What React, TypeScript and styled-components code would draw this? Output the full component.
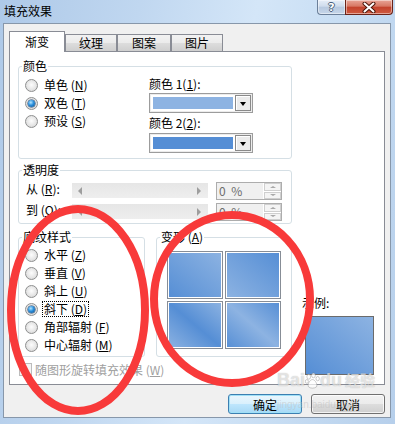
import styled, { createGlobalStyle, css } from 'styled-components'

const LIGHT = '#8db3e2'
const DARK = '#558ed5'

const GlobalStyle = createGlobalStyle`
  html, body { margin: 0; padding: 0; }
  body {
    font-family: "Noto Sans CJK SC", "Liberation Sans", sans-serif;
    font-size: 12px;
    color: #000;
  }
`

const Window = styled.div`
  position: relative;
  width: 395px;
  height: 424px;
  overflow: hidden;
  display: flex;
  flex-direction: column;
  background: linear-gradient(100deg, #aec9e8 0%, #c0d7f0 30%, #d4e6f8 55%, #c7ddf3 75%, #b6cfeb 100%);
`

const TitleBar = styled.div`
  display: flex;
  align-items: flex-start;
  height: 23px;
  flex-shrink: 0;
`

const Title = styled.div`
  padding: 3px 0 0 4px;
  font-size: 12px;
  line-height: 16px;
`

const Caption = styled.div`
  display: flex;
  margin-left: auto;
  margin-right: 2px;
`

const CaptionButton = styled.div<{ $close?: boolean }>`
  box-sizing: border-box;
  height: 15px;
  width: ${p => (p.$close ? 48 : 28)}px;
  display: flex;
  align-items: center;
  justify-content: center;
  border: 1px solid ${p => (p.$close ? '#6b2318' : '#6b7f99')};
  border-top: none;
  box-shadow: inset 0 0 0 1px rgba(255, 255, 255, 0.45);
  ${p =>
    p.$close
      ? css`
          border-radius: 0 0 4px 0;
          background: linear-gradient(#e8a597 0%, #d77763 45%, #c3422c 50%, #cf5a40 100%);
        `
      : css`
          border-right: none;
          border-radius: 0 0 0 4px;
          background: linear-gradient(#e6eef8 0%, #cfdcec 45%, #b7c9df 50%, #c6d6ea 100%);
        `}
`

const HelpGlyph = styled.span`
  font-family: "DejaVu Sans", sans-serif;
  font-weight: bold;
  font-size: 11px;
  line-height: 11px;
  color: #fff;
  text-shadow: 1px 0 0 #4a5f7a, -1px 0 0 #4a5f7a, 0 1px 0 #4a5f7a, 0 -1px 0 #4a5f7a;
`

const Client = styled.div`
  box-sizing: border-box;
  height: 395px;
  margin: 0 4px 0 3px;
  padding: 7px 5px 0;
  border: 1px solid #8797aa;
  background: #f0f0f0;
  display: flex;
  flex-direction: column;
`

const TabRow = styled.div`
  display: flex;
  align-items: flex-end;
  height: 21px;
  margin-bottom: -1px;
  position: relative;
  z-index: 1;
`

const Tab = styled.div<{ $active?: boolean; $width: number }>`
  box-sizing: border-box;
  width: ${p => p.$width}px;
  border: 1px solid #898c95;
  border-bottom: none;
  text-align: center;
  font-size: 12px;
  ${p =>
    p.$active
      ? css`
          height: 21px;
          line-height: 20px;
          background: #fff;
        `
      : css`
          height: 17px;
          line-height: 16px;
          margin-bottom: 1px;
          background: linear-gradient(#f2f2f2 0%, #ebebeb 50%, #dddddd 51%, #cfcfcf 100%);
        `}
`

const Panel = styled.div`
  box-sizing: border-box;
  height: 334px;
  flex-shrink: 0;
  border: 1px solid #898c95;
  background: #fff;
  padding: 7px 0 8px 8px;
  display: flex;
  gap: 10px;
`

const LeftCol = styled.div`
  width: 274px;
  display: flex;
  flex-direction: column;
`

const Group = styled.fieldset<{ $mt?: number; $width?: number }>`
  margin: ${p => p.$mt ?? 0}px 0 0;
  padding: 0;
  min-width: 0;
  ${p => p.$width && `width: ${p.$width}px;`}
  box-sizing: border-box;
  border: 1px solid #d5dfe5;
  border-radius: 3px;
`

const Legend = styled.legend`
  margin-left: 3px;
  padding: 0 1px;
  font-size: 12px;
  line-height: 14px;
`

const ColorBody = styled.div`
  display: flex;
  padding: 3px 0 5px 6px;
`

const RadioList = styled.div<{ $width?: number }>`
  display: flex;
  flex-direction: column;
  ${p => p.$width && `width: ${p.$width}px;`}
`

const RadioRow = styled.div`
  display: flex;
  align-items: center;
  height: 18px;
  gap: 5px;
`

const Radio = styled.span<{ $checked?: boolean }>`
  position: relative;
  box-sizing: border-box;
  width: 13px;
  height: 13px;
  flex-shrink: 0;
  border-radius: 50%;
  border: 1px solid #8e8f8f;
  background: radial-gradient(circle at 50% 45%, #fdfdfd 0, #e6e6e6 55%, #cdcdcd 100%);
  ${p =>
    p.$checked &&
    css`
      &::after {
        content: '';
        position: absolute;
        left: 2px;
        top: 2px;
        width: 7px;
        height: 7px;
        border-radius: 50%;
        background: radial-gradient(circle at 40% 35%, #b4e6ff 0, #2b8fdc 45%, #0d4a86 100%);
        box-shadow: 0 0 0 0.5px #1b3f66;
      }
    `}
`

const RadioText = styled.span<{ $focused?: boolean }>`
  padding: 0 1px;
  line-height: 14px;
  white-space: nowrap;
  ${p => p.$focused && `outline: 1px dotted #000;`}
`

const Pickers = styled.div`
  display: flex;
  flex-direction: column;
`

const FieldLabel = styled.div<{ $mt?: number }>`
  line-height: 16px;
  margin-top: ${p => p.$mt ?? 0}px;
  white-space: nowrap;
`

const ColorSelect = styled.div<{ $mt: number }>`
  box-sizing: border-box;
  width: 104px;
  height: 20px;
  margin-top: ${p => p.$mt}px;
  border: 1px solid #9c9c9c;
  box-shadow: inset 0 0 0 1px #ececec;
  background: #fff;
  display: flex;
  padding: 1px;
`

const Swatch = styled.div<{ $color: string }>`
  flex: 1;
  margin: 2px;
  background: ${p => p.$color};
`

const DropButton = styled.div`
  box-sizing: border-box;
  width: 16px;
  border: 1px solid #8a8a8a;
  box-shadow: inset 1px 1px 0 #fff;
  background: #ececec;
  display: flex;
  align-items: center;
  justify-content: center;
  &::after {
    content: '';
    border-left: 3px solid transparent;
    border-right: 3px solid transparent;
    border-top: 4px solid #000;
    margin-top: 1px;
  }
`

const TransBody = styled.div`
  display: flex;
  flex-direction: column;
  gap: 3px;
  padding: 5px 0 2px 7px;
`

const SliderRow = styled.div`
  display: flex;
  align-items: flex-start;
  height: 18px;
`

const RowLabel = styled.span`
  width: 46px;
  line-height: 14px;
  white-space: nowrap;
`

const Track = styled.div`
  box-sizing: border-box;
  width: 136px;
  height: 15px;
  margin-top: 1px;
  padding: 0 7px 0 6px;
  background: linear-gradient(#e6e6e6, #eeeeee);
  display: flex;
  align-items: center;
  justify-content: space-between;
`

const Arrow = styled.span<{ $dir: 'left' | 'right' | 'up' | 'down'; $size: number }>`
  width: 0;
  height: 0;
  ${p =>
    p.$dir === 'left' || p.$dir === 'right'
      ? css`
          border-top: ${p.$size}px solid transparent;
          border-bottom: ${p.$size}px solid transparent;
          border-${p.$dir === 'left' ? 'right' : 'left'}: ${p.$size}px solid #9e9e9e;
        `
      : css`
          border-left: ${p.$size}px solid transparent;
          border-right: ${p.$size}px solid transparent;
          border-${p.$dir === 'up' ? 'bottom' : 'top'}: ${p.$size - 1}px solid #a8a8a8;
        `}
`

const Spin = styled.div`
  box-sizing: border-box;
  width: 66px;
  height: 18px;
  margin-left: 8px;
  border: 1px solid #adadad;
  background: #f0f0f0;
  display: flex;
`

const SpinValue = styled.span`
  flex: 1;
  padding-left: 2px;
  line-height: 16px;
  color: #6d6d6d;
  word-spacing: 3px;
`

const SpinButtons = styled.div`
  width: 17px;
  display: flex;
  flex-direction: column;
  gap: 1px;
  padding: 0 0 0 1px;
  background: #fff;
`

const SpinButton = styled.div`
  flex: 1;
  box-sizing: border-box;
  border: 1px solid #cfcfcf;
  background: #f4f4f4;
  display: flex;
  align-items: center;
  justify-content: center;
`

const BottomRow = styled.div`
  display: flex;
  gap: 11px;
  margin-top: 6px;
`

const ShadeBody = styled.div`
  padding: 2px 0 2px 6px;
`

const VariantBody = styled.div`
  display: grid;
  grid-template-columns: 56px 56px;
  gap: 2px;
  padding: 7px 0 7px 10px;
`

const Tile = styled.div<{ $bg: string }>`
  box-sizing: border-box;
  height: 48px;
  border: 1px solid #878d96;
  box-shadow: inset 0 0 0 1px #fff;
  background: ${p => p.$bg};
`

const CheckRow = styled.div`
  display: flex;
  align-items: center;
  gap: 3px;
  height: 13px;
  margin: 6px 0 0 1px;
  color: #a0a0a0;
`

const CheckBox = styled.span`
  box-sizing: border-box;
  width: 13px;
  height: 13px;
  border: 1px solid #bcbcbc;
  background: #f4f4f4;
`

const SampleCol = styled.div`
  display: flex;
  flex-direction: column;
  justify-content: flex-end;
`

const SampleLabel = styled.div`
  line-height: 16px;
  margin-bottom: 5px;
`

const SampleBox = styled.div`
  box-sizing: border-box;
  width: 69px;
  height: 59px;
  margin: 0 0 1px 3px;
  border: 1px solid #6b6b6b;
  background: linear-gradient(to bottom left, ${LIGHT}, ${DARK});
`

const ButtonRow = styled.div`
  display: flex;
  justify-content: flex-end;
  gap: 9px;
  margin-top: 9px;
`

const Button = styled.button<{ $default?: boolean }>`
  box-sizing: border-box;
  width: 74px;
  height: 20px;
  padding: 0;
  font-family: inherit;
  font-size: 12px;
  color: #000;
  border: 1px solid #707070;
  border-radius: 3px;
  background: linear-gradient(#f2f2f2 0%, #ebebeb 50%, #dddddd 51%, #cfcfcf 100%);
  box-shadow: inset 0 0 0 1px rgba(255, 255, 255, 0.75);
  ${p =>
    p.$default &&
    css`
      border-color: #3c7fb1;
      box-shadow: inset 0 0 0 1px #9fe0f7;
      background: linear-gradient(#eaf6fd 0%, #d9f0fc 50%, #bee6fd 51%, #a7d9f5 100%);
    `}
`

const Annotations = styled.svg`
  position: absolute;
  left: 0;
  top: 0;
  pointer-events: none;
`

const Watermark = styled.div`
  position: absolute;
  left: 277px;
  top: 369px;
  pointer-events: none;
  color: rgba(255, 255, 255, 0.6);
  text-shadow: 0 0 1px rgba(90, 90, 90, 0.45);
`

const WatermarkLogo = styled.div`
  display: flex;
  align-items: center;
  font-family: "Liberation Sans", sans-serif;
  font-weight: bold;
  font-size: 18px;
  line-height: 22px;
`

const WatermarkCn = styled.span`
  margin-left: 3px;
  font-family: "Noto Sans CJK SC", sans-serif;
  font-size: 15px;
`

const WatermarkUrl = styled.div`
  margin-top: 8px;
  font-family: "Liberation Sans", sans-serif;
  font-size: 10px;
  line-height: 12px;
  color: rgba(190, 190, 190, 0.5);
  text-shadow: none;
`

const colorOptions = [
  { key: 'N', label: '单色' },
  { key: 'T', label: '双色', checked: true },
  { key: 'S', label: '预设' },
]

const shadeOptions = [
  { key: 'Z', label: '水平' },
  { key: 'V', label: '垂直' },
  { key: 'U', label: '斜上' },
  { key: 'D', label: '斜下', checked: true },
  { key: 'F', label: '角部辐射' },
  { key: 'M', label: '中心辐射' },
]

const tiles = [
  `linear-gradient(to bottom left, ${LIGHT}, ${DARK})`,
  `linear-gradient(to bottom left, ${DARK}, ${LIGHT})`,
  `linear-gradient(to bottom left, ${LIGHT}, ${DARK} 50%, ${LIGHT})`,
  `linear-gradient(to bottom left, ${DARK}, ${LIGHT} 50%, ${DARK})`,
]

type Option = { key: string; label: string; checked?: boolean }

const Options = ({ items, width }: { items: Option[]; width?: number }) => (
  <RadioList $width={width}>
    {items.map(o => (
      <RadioRow key={o.key}>
        <Radio $checked={o.checked} />
        <RadioText $focused={o.checked && o.key === 'D'}>
          {o.label} (<u>{o.key}</u>)
        </RadioText>
      </RadioRow>
    ))}
  </RadioList>
)

const SliderLine = ({ label, mnemonic }: { label: string; mnemonic: string }) => (
  <SliderRow>
    <RowLabel>
      {label} (<u>{mnemonic}</u>):
    </RowLabel>
    <Track>
      <Arrow $dir="left" $size={4} />
      <Arrow $dir="right" $size={4} />
    </Track>
    <Spin>
      <SpinValue>0 %</SpinValue>
      <SpinButtons>
        <SpinButton>
          <Arrow $dir="up" $size={3} />
        </SpinButton>
        <SpinButton>
          <Arrow $dir="down" $size={3} />
        </SpinButton>
      </SpinButtons>
    </Spin>
  </SliderRow>
)

const App = () => {
  return (
    <>
      <GlobalStyle />
      <Window>
        <TitleBar>
          <Title>填充效果</Title>
          <Caption>
            <CaptionButton>
              <HelpGlyph>?</HelpGlyph>
            </CaptionButton>
            <CaptionButton $close>
              <svg width="14" height="11" viewBox="0 0 14 11">
                <path d="M2.5 1.5 L11.5 9.5 M11.5 1.5 L2.5 9.5" stroke="#4a1408" strokeWidth="4" strokeLinecap="round" />
                <path d="M2.5 1.5 L11.5 9.5 M11.5 1.5 L2.5 9.5" stroke="#fff" strokeWidth="2" strokeLinecap="round" />
              </svg>
            </CaptionButton>
          </Caption>
        </TitleBar>

        <Client>
          <TabRow>
            <Tab $active $width={56}>渐变</Tab>
            <Tab $width={52}>纹理</Tab>
            <Tab $width={54}>图案</Tab>
            <Tab $width={52}>图片</Tab>
          </TabRow>

          <Panel>
            <LeftCol>
              <Group>
                <Legend>颜色</Legend>
                <ColorBody>
                  <Options items={colorOptions} width={124} />
                  <Pickers>
                    <FieldLabel>
                      颜色 1(<u>1</u>):
                    </FieldLabel>
                    <ColorSelect $mt={1}>
                      <Swatch $color={LIGHT} />
                      <DropButton />
                    </ColorSelect>
                    <FieldLabel $mt={2}>
                      颜色 2(<u>2</u>):
                    </FieldLabel>
                    <ColorSelect $mt={2}>
                      <Swatch $color={DARK} />
                      <DropButton />
                    </ColorSelect>
                  </Pickers>
                </ColorBody>
              </Group>

              <Group $mt={4}>
                <Legend>透明度</Legend>
                <TransBody>
                  <SliderLine label="从" mnemonic="R" />
                  <SliderLine label="到" mnemonic="O" />
                </TransBody>
              </Group>

              <BottomRow>
                <Group $width={127}>
                  <Legend>底纹样式</Legend>
                  <ShadeBody>
                    <Options items={shadeOptions} />
                  </ShadeBody>
                </Group>
                <Group $width={136}>
                  <Legend>
                    变形 (<u>A</u>)
                  </Legend>
                  <VariantBody>
                    {tiles.map((bg, i) => (
                      <Tile key={i} $bg={bg} />
                    ))}
                  </VariantBody>
                </Group>
              </BottomRow>

              <CheckRow>
                <CheckBox />
                <span>
                  随图形旋转填充效果 (<u>W</u>)
                </span>
              </CheckRow>
            </LeftCol>

            <SampleCol>
              <SampleLabel>示例:</SampleLabel>
              <SampleBox />
            </SampleCol>
          </Panel>

          <ButtonRow>
            <Button $default>确定</Button>
            <Button>取消</Button>
          </ButtonRow>
        </Client>

        <Watermark>
          <WatermarkLogo>
            Bai
            <svg width="15" height="17" viewBox="0 0 16 18">
              <g fill="rgba(255,255,255,0.7)" stroke="rgba(110,110,110,0.45)" strokeWidth="0.8">
                <ellipse cx="4" cy="5" rx="2" ry="2.6" />
                <ellipse cx="9" cy="3.5" rx="2" ry="2.6" />
                <ellipse cx="13.5" cy="7" rx="1.8" ry="2.3" />
                <ellipse cx="2" cy="10" rx="1.6" ry="2.1" />
                <path d="M8 8 C11 8 14 14 12 16 C10 17.5 6 17.5 4 16 C2 14 5 8 8 8 Z" />
              </g>
            </svg>
            du
            <WatermarkCn>经验</WatermarkCn>
          </WatermarkLogo>
          <WatermarkUrl>jingyan.baidu.com</WatermarkUrl>
        </Watermark>

        <Annotations width="395" height="424" viewBox="0 0 395 424">
          <ellipse cx="78" cy="310" rx="67" ry="101" fill="none" stroke="#f83a3a" strokeWidth="8" />
          <ellipse cx="232" cy="299" rx="78" ry="84" fill="none" stroke="#f83a3a" strokeWidth="8" />
        </Annotations>
      </Window>
    </>
  )
}

export default App
